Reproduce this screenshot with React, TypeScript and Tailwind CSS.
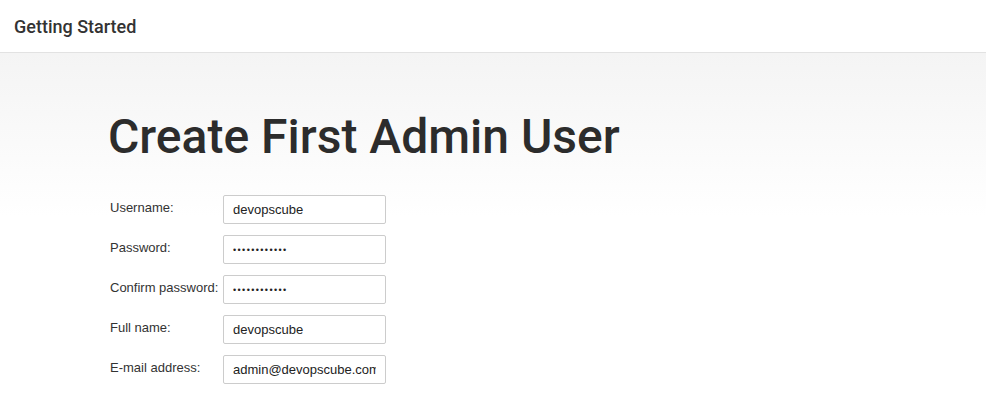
export default function App() {
  const fields = [
    { label: 'Username:', value: 'devopscube', type: 'text' },
    { label: 'Password:', value: 'devopscube12', type: 'password' },
    { label: 'Confirm password:', value: 'devopscube12', type: 'password' },
    { label: 'Full name:', value: 'devopscube', type: 'text' },
    { label: 'E-mail address:', value: 'admin@devopscube.com', type: 'text' },
  ]

  return (
    <div className="w-[986px] h-[416px] overflow-hidden bg-white">
      {/* header */}
      <div className="h-[53px] flex items-center px-[14px] pt-[1px] border-b border-[#e2e2e2] bg-white">
        <span className="text-[18px] font-medium text-[#333]" style={{ fontFamily: 'Roboto, sans-serif' }}>
          Getting Started
        </span>
      </div>

      <div className="h-[363px] bg-gradient-to-b from-[#f4f4f4] to-white to-[45%] pl-[108px]">
        <h1
          className="pt-[52px] text-[48px] leading-[64px] text-[#2c2c2c] font-medium"
          style={{ fontFamily: 'Roboto, sans-serif' }}
        >
          Create First Admin User
        </h1>

        <div className="mt-[26px] flex flex-col gap-[11px]" style={{ fontFamily: '"Liberation Sans", Arial, sans-serif' }}>
          {fields.map((f) => (
            <div key={f.label} className="flex items-start">
              <label className="w-[115px] pl-[2px] pt-[3px] text-[13px] text-[#333]">{f.label}</label>
              <input
                type={f.type}
                defaultValue={f.value}
                readOnly
                className={
                  f.type === 'password'
                    ? 'w-[163px] h-[29px] px-[9px] border border-[#ccc] rounded-[2px] bg-white text-[9px] tracking-[1.4px] text-[#222] outline-none'
                    : 'w-[163px] h-[29px] px-[9px] border border-[#ccc] rounded-[2px] bg-white text-[13px] text-[#222] outline-none'
                }
              />
            </div>
          ))}
        </div>
      </div>
    </div>
  )
}
